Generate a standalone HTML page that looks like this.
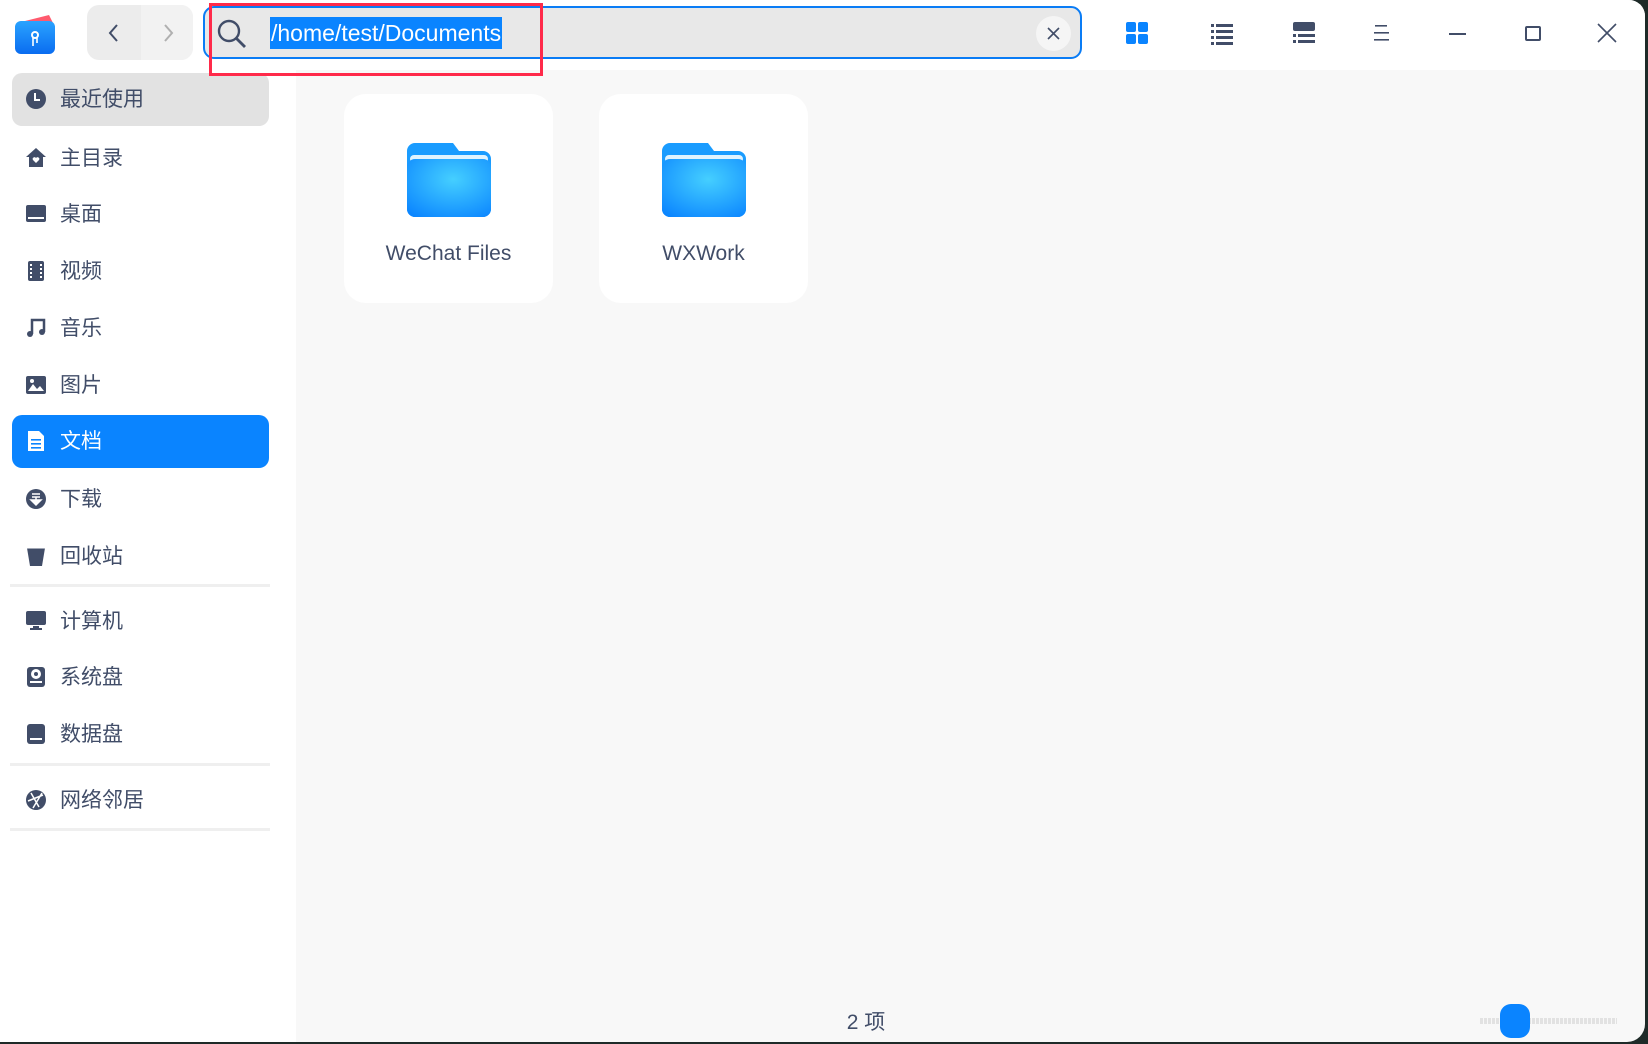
<!DOCTYPE html>
<html><head><meta charset="utf-8"><style>
*{margin:0;padding:0;box-sizing:border-box}
body{width:1648px;height:1044px;background:#1e2a28;overflow:hidden;font-family:"Liberation Sans","Noto Sans CJK SC",sans-serif;position:relative}
.win{position:absolute;left:0;top:0;width:1645px;height:1042px;background:#f8f8f8;border-radius:0 16px 18px 0;overflow:hidden}
.hdr{position:absolute;left:0;top:0;width:100%;height:70px;background:#fff}
.side{position:absolute;left:0;top:70px;width:296px;height:980px;background:#fff}
.abs{position:absolute}
.item{position:absolute;left:12px;width:257px;height:53px;border-radius:10px;font-size:21px;color:#414d68;line-height:53px;padding-left:48px}
.item svg{position:absolute;left:13px;top:15px}
.sep{position:absolute;left:10px;width:260px;height:3px;background:#efefef}
.card{position:absolute;top:94px;width:209px;height:209px;background:#fff;border-radius:22px;text-align:center}
.card .lbl{position:absolute;left:0;right:0;top:148px;font-size:21px;color:#414d68}
</style></head><body>
<div class="win">
<div class="hdr">
 <svg class="abs" style="left:13px;top:11px" width="44" height="44" viewBox="0 0 44 44"><defs><linearGradient id="lg" x1="0" y1="0" x2="0" y2="1"><stop offset="0" stop-color="#2aa3ff"/><stop offset="1" stop-color="#0a6cf0"/></linearGradient></defs><path d="M4 12 L36 4 L40 12Z" fill="#ff5a6e"/><rect x="2" y="10" width="40" height="33" rx="6" fill="url(#lg)"/><circle cx="22" cy="24" r="3" fill="none" stroke="#fff" stroke-width="2"/><path d="M20 27v8M24 27v5" stroke="#fff" stroke-width="1.6"/></svg>
 <div class="abs" style="left:87px;top:5px;width:106px;height:55px;border-radius:12px;background:#ececec;overflow:hidden"><div style="position:absolute;left:54px;top:0;width:52px;height:55px;background:#f2f2f2"></div></div>
 <svg class="abs" style="left:104px;top:22px" width="20" height="22"><path d="M13 3 L6 11 L13 19" fill="none" stroke="#414d68" stroke-width="2"/></svg>
 <svg class="abs" style="left:158px;top:22px" width="20" height="22"><path d="M7 3 L14 11 L7 19" fill="none" stroke="#b0b0b0" stroke-width="2"/></svg>
 <div class="abs" style="left:203px;top:6px;width:879px;height:53px;border:2.5px solid #0a7cf5;border-radius:11px;background:#e8e8e8"></div>
 <svg class="abs" style="left:215px;top:17px" width="34" height="34"><circle cx="14" cy="14" r="10" fill="none" stroke="#414d68" stroke-width="2.4"/><path d="M21 21 L30 30" stroke="#414d68" stroke-width="2.8"/></svg>
 <div class="abs" style="left:270px;top:17px;height:32px;background:#0a84ff;color:#fff;font-size:23px;line-height:32px;padding:0 1px">/home/test/Documents</div>
 <div class="abs" style="left:1036px;top:16px;width:35px;height:35px;border-radius:50%;background:#f5f5f5"></div>
 <svg class="abs" style="left:1046px;top:26px" width="15" height="15"><path d="M2 2L13 13M13 2L2 13" stroke="#414d68" stroke-width="1.6"/></svg>
 <svg class="abs" style="left:1126px;top:22px" width="22" height="22"><rect x="0" y="0" width="10" height="10" rx="2" fill="#0a84ff"/><rect x="12" y="0" width="10" height="10" rx="2" fill="#0a84ff"/><rect x="0" y="12" width="10" height="10" rx="2" fill="#0a84ff"/><rect x="12" y="12" width="10" height="10" rx="2" fill="#0a84ff"/></svg>
 <svg class="abs" style="left:1211px;top:23px" width="22" height="22"><g fill="#414d68"><rect x="0" y="1" width="3" height="3"/><rect x="5" y="1" width="17" height="3"/><rect x="0" y="7" width="3" height="3"/><rect x="5" y="7" width="17" height="3"/><rect x="0" y="13" width="3" height="3"/><rect x="5" y="13" width="17" height="3"/><rect x="0" y="19" width="3" height="3"/><rect x="5" y="19" width="17" height="3"/></g></svg>
 <svg class="abs" style="left:1293px;top:22px" width="22" height="23"><g fill="#414d68"><rect x="0" y="0" width="22" height="9" rx="2"/><rect x="0" y="12" width="3" height="3"/><rect x="5" y="12" width="17" height="3"/><rect x="0" y="18" width="3" height="3"/><rect x="5" y="18" width="17" height="3"/></g></svg>
 <svg class="abs" style="left:1374px;top:24px" width="16" height="18"><g fill="#414d68"><rect x="1" y="1" width="12" height="1.6"/><rect x="0" y="8" width="15" height="1.6"/><rect x="0" y="15" width="15" height="1.6"/></g></svg>
 <div class="abs" style="left:1449px;top:33px;width:17px;height:2px;background:#414d68"></div>
 <div class="abs" style="left:1525px;top:26px;width:16px;height:15px;border:2px solid #414d68;border-radius:2px"></div>
 <svg class="abs" style="left:1597px;top:23px" width="20" height="20"><path d="M1 1L19 19M19 1L1 19" stroke="#414d68" stroke-width="1.6"/></svg>
</div>
<div class="side"></div>
<div class="item" style="top:73px;background:#e2e2e2"><svg width="22" height="22"><circle cx="11" cy="11" r="10" fill="#414d68"/><path d="M10 5v7h5" fill="none" stroke="#fff" stroke-width="2"/></svg>最近使用</div>
<div class="item" style="top:132px"><svg width="22" height="22"><path d="M11 1L21 10H18V20H4V10H1Z" fill="#414d68"/><path d="M11 16l-3-3a1.6 1.6 0 0 1 3-2 1.6 1.6 0 0 1 3 2z" fill="#fff"/></svg>主目录</div>
<div class="item" style="top:188px"><svg width="22" height="22"><rect x="1" y="2" width="20" height="17" rx="2" fill="#414d68"/><rect x="3" y="14" width="16" height="2" fill="#fff"/></svg>桌面</div>
<div class="item" style="top:245px"><svg width="22" height="22"><rect x="3" y="1" width="16" height="20" rx="2" fill="#414d68"/><g fill="#fff"><rect x="5" y="4" width="2" height="2"/><rect x="5" y="8" width="2" height="2"/><rect x="5" y="12" width="2" height="2"/><rect x="5" y="16" width="2" height="2"/><rect x="15" y="4" width="2" height="2"/><rect x="15" y="8" width="2" height="2"/><rect x="15" y="12" width="2" height="2"/><rect x="15" y="16" width="2" height="2"/></g></svg>视频</div>
<div class="item" style="top:302px"><svg width="22" height="22"><path d="M7 17V3H19V15" fill="none" stroke="#414d68" stroke-width="2.5"/><circle cx="5" cy="17" r="3" fill="#414d68"/><circle cx="17" cy="15" r="3" fill="#414d68"/></svg>音乐</div>
<div class="item" style="top:359px"><svg width="22" height="22"><rect x="1" y="2" width="20" height="18" rx="2" fill="#414d68"/><path d="M3 17L8 10L12 15L15 12L19 17Z" fill="#fff"/><circle cx="7" cy="7" r="2" fill="#fff"/></svg>图片</div>
<div class="item" style="top:415px;background:#0a84ff;color:#fff"><svg width="22" height="22"><path d="M3 1H14L19 6V21H3Z" fill="#fff"/><g fill="#0a84ff"><rect x="6" y="9" width="10" height="1.6"/><rect x="6" y="13" width="10" height="1.6"/><rect x="6" y="17" width="10" height="1.6"/></g></svg>文档</div>
<div class="item" style="top:473px"><svg width="22" height="22"><circle cx="11" cy="11" r="10" fill="#414d68"/><path d="M7 6h8M7 9h8M11 9v3M6 12h10l-5 5z" stroke="#fff" stroke-width="1.5" fill="#fff"/></svg>下载</div>
<div class="item" style="top:530px"><svg width="22" height="22"><path d="M2 3H20L17 21H5Z" fill="#414d68"/><path d="M2 3H20" stroke="#fff" stroke-width="1"/></svg>回收站</div>
<div class="sep" style="top:584px"></div>
<div class="item" style="top:595px"><svg width="22" height="22"><rect x="1" y="1" width="20" height="14" rx="2" fill="#414d68"/><rect x="8" y="16" width="6" height="2" fill="#414d68"/><rect x="5" y="18" width="12" height="2" fill="#414d68"/></svg>计算机</div>
<div class="item" style="top:651px"><svg width="22" height="22"><rect x="2" y="1" width="18" height="20" rx="3" fill="#414d68"/><circle cx="11" cy="8" r="5" fill="#fff"/><circle cx="11" cy="8" r="2" fill="#414d68"/><rect x="5" y="15" width="12" height="2" fill="#fff"/></svg>系统盘</div>
<div class="item" style="top:708px"><svg width="22" height="22"><rect x="2" y="1" width="18" height="20" rx="3" fill="#414d68"/><rect x="5" y="15" width="12" height="2" fill="#fff"/></svg>数据盘</div>
<div class="sep" style="top:763px"></div>
<div class="item" style="top:774px"><svg width="22" height="22"><circle cx="11" cy="11" r="10" fill="#414d68"/><path d="M6 4L14 18M3 12L18 6M8 19L17 4" stroke="#fff" stroke-width="1.5"/></svg>网络邻居</div>
<div class="sep" style="top:828px"></div>

<svg width="0" height="0" style="position:absolute"><defs><radialGradient id="fg" cx="0.55" cy="0.35" r="0.8"><stop offset="0" stop-color="#45cfff"/><stop offset="1" stop-color="#0a84ff"/></radialGradient></defs></svg>
<div class="card" style="left:344px"><svg style="position:absolute;left:63px;top:49px" width="84" height="74" viewBox="0 0 84 74"><path d="M0 8a8 8 0 0 1 8-8h38l6 8h24a8 8 0 0 1 8 8v50a8 8 0 0 1-8 8H8a8 8 0 0 1-8-8z" fill="#1a9cff"/><rect x="3" y="12" width="78" height="8" rx="4" fill="#dff3ff"/><rect x="0" y="16" width="84" height="58" rx="8" fill="url(#fg)"/></svg><div class="lbl">WeChat Files</div></div>
<div class="card" style="left:599px"><svg style="position:absolute;left:63px;top:49px" width="84" height="74" viewBox="0 0 84 74"><path d="M0 8a8 8 0 0 1 8-8h38l6 8h24a8 8 0 0 1 8 8v50a8 8 0 0 1-8 8H8a8 8 0 0 1-8-8z" fill="#1a9cff"/><rect x="3" y="12" width="78" height="8" rx="4" fill="#dff3ff"/><rect x="0" y="16" width="84" height="58" rx="8" fill="url(#fg)"/></svg><div class="lbl">WXWork</div></div>

<div class="abs" style="left:820px;top:1006px;width:92px;text-align:center;font-size:21px;color:#414d68">2 项</div>
<div class="abs" style="left:1480px;top:1018px;width:137px;height:6px;background:repeating-linear-gradient(90deg,#e2e2e2 0 3px,transparent 3px 4px)"></div>
<div class="abs" style="left:1500px;top:1004px;width:30px;height:34px;border-radius:11px;background:#0a84ff"></div>
<div class="abs" style="left:209px;top:3px;width:334px;height:73px;border:3px solid #ff2a4a"></div>
</div>
</body></html>
